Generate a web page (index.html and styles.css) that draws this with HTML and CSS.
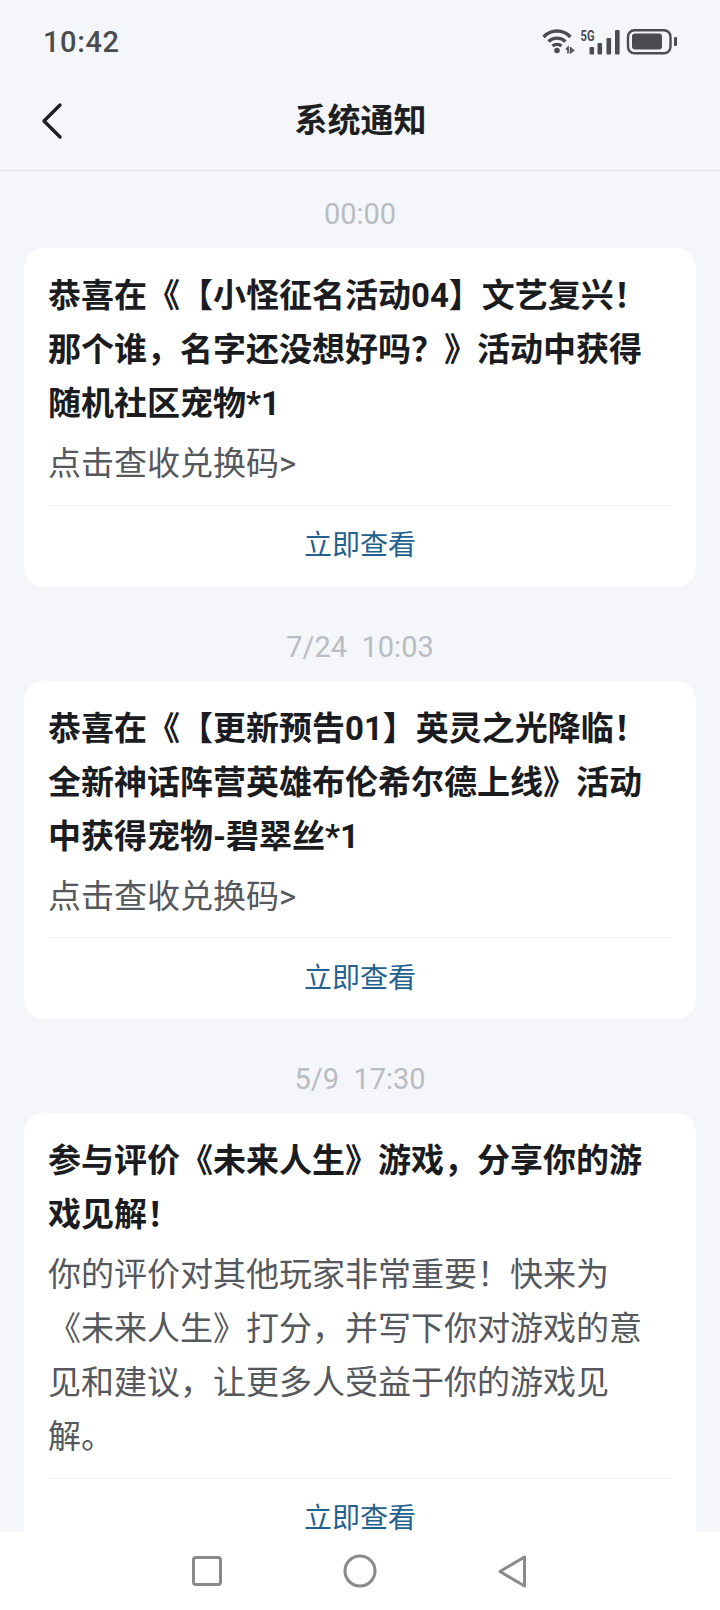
FILE: index.html
```html
<!DOCTYPE html>
<html lang="zh-CN">
<head>
<meta charset="utf-8">
<title>系统通知</title>
<link rel="stylesheet" href="styles.css">
</head>
<body>
<div class="screen">
  <div class="status">
    <span class="clock">10:42</span>
    <svg class="status-icons" width="136" height="34" viewBox="0 -4 136 34">
      <g fill="none" stroke="#4a4c50" stroke-width="3.400">
        <path d="M1.500 8 C9 0 21 0 28.500 8"/>
        <path d="M6.500 12.500 C11 8 19 8 23.500 12.500"/>
        <path d="M10.500 17 C13 15 17 15 19.500 17"/>
      </g>
      <circle cx="15" cy="21.500" r="2.800" fill="#4a4c50"/>
      <path d="M24 20.500 L26 18.500 V24.500 M28.500 18 V24.500 M28.500 19 L31.500 21.500 L28.500 23.500" fill="none" stroke="#4a4c50" stroke-width="1.600"/>
      <text x="38.500" y="12" class="five-g" textLength="14" lengthAdjust="spacingAndGlyphs">5G</text>
      <g fill="#4a4c50">
        <rect x="47.500" y="18" width="4.600" height="7.500" rx="1"/>
        <rect x="55.500" y="14" width="4.600" height="11.500" rx="1"/>
        <rect x="64.500" y="9" width="4.600" height="16.500" rx="1"/>
        <rect x="73" y="1" width="4.600" height="24.500" rx="1"/>
        <rect x="90" y="4.500" width="30" height="16" rx="3"/>
        <rect x="132" y="8" width="3" height="9" rx="1"/>
      </g>
      <rect x="86" y="1.200" width="42.500" height="23" rx="6.500" fill="none" stroke="#4a4c50" stroke-width="2.400"/>
    </svg>
  </div>
  <header class="topbar">
    <svg class="back" width="24" height="40" viewBox="0 0 24 40"><path d="M19 4 L3 20 L19 36" fill="none" stroke="#1d1f22" stroke-width="3.400" stroke-linecap="round" stroke-linejoin="round"/></svg>
    <h1 class="page-title">系统通知</h1>
  </header>
  <main class="feed">
    <div class="stamp">00:00</div>
    <article class="card">
      <h2 class="msg-title">恭喜在《【小怪征名活动04】文艺复兴！那个谁，名字还没想好吗？》活动中获得随机社区宠物*1</h2>
      <p class="msg-body">点击查收兑换码&gt;</p>
      <div class="action">立即查看</div>
    </article>
    <div class="stamp">7/24&nbsp;&nbsp;10:03</div>
    <article class="card">
      <h2 class="msg-title">恭喜在《【更新预告01】英灵之光降临！全新神话阵营英雄布伦希尔德上线》活动中获得宠物-碧翠丝*1</h2>
      <p class="msg-body">点击查收兑换码&gt;</p>
      <div class="action">立即查看</div>
    </article>
    <div class="stamp">5/9&nbsp;&nbsp;17:30</div>
    <article class="card">
      <h2 class="msg-title">参与评价《未来人生》游戏，分享你的游戏见解！</h2>
      <p class="msg-body">你的评价对其他玩家非常重要！快来为《未来人生》打分，并写下你对游戏的意见和建议，让更多人受益于你的游戏见解。</p>
      <div class="action">立即查看</div>
    </article>
  </main>
  <nav class="navbar">
    <svg width="30" height="30" viewBox="0 0 30 30"><rect x="1.500" y="1.500" width="27" height="27" rx="2.500" fill="none" stroke="#8a8a8a" stroke-width="3"/></svg>
    <svg width="34" height="34" viewBox="0 0 34 34"><circle cx="17" cy="17" r="15" fill="none" stroke="#8a8a8a" stroke-width="3"/></svg>
    <svg width="29" height="33" viewBox="0 0 29 33"><path d="M26.500 2 V31 L2 16.500 Z" fill="none" stroke="#8a8a8a" stroke-width="3" stroke-linejoin="round"/></svg>
  </nav>
</div>
</body>
</html>
```
FILE: styles.css
```css
* { box-sizing: border-box; }
html, body { margin: 0; padding: 0; }
body { font-family: "Roboto", "Noto Sans CJK SC", sans-serif; background: #f4f6f9; text-spacing-trim: space-all; }
.screen { width: 720px; height: 1610px; display: flex; flex-direction: column; overflow: hidden; background: #f4f6f9; }
.status { height: 84px; flex: none; display: flex; align-items: center; justify-content: space-between; padding: 0 42px 0 43px; }
.clock { font-family: "Roboto", sans-serif; font-size: 29px; font-weight: 500; color: #4a4c50; letter-spacing: 0.600px; }
.status-icons { display: block; }
.five-g { font-family: "Roboto", sans-serif; font-size: 15px; font-weight: 700; fill: #4a4c50; }
.topbar { height: 87px; flex: none; display: grid; grid-template-columns: 1fr auto 1fr; align-items: center; padding: 0 0 13px 41px; border-bottom: 1px solid #e3e5e8; }
.back { display: block; }
.page-title { margin: 0; font-size: 33px; line-height: 44px; font-weight: 700; color: #1d1f22; transform: translateX(-20px); }
.feed { flex: 1; min-height: 0; overflow: hidden; padding: 0 24px; }
.stamp { height: 77px; padding-top: 22px; text-align: center; font-size: 29px; line-height: 43px; color: #b9bcc1; }
.card + .stamp { margin-top: 17px; }
.card { background: #fff; border-radius: 20px; padding: 21px 24px 0; }
.msg-title { margin: 0; font-size: 33px; font-weight: 700; line-height: 54px; color: #1a1c1f; }
.msg-body { margin: 6px 0 0; padding-bottom: 13.500px; font-size: 33px; font-weight: 400; line-height: 54px; color: #55585d; }
.action { border-top: 1px solid #f2f3f5; height: 82px; padding-bottom: 6px; display: flex; align-items: center; justify-content: center; font-size: 28px; color: #24618f; }
.navbar { height: 78px; flex: none; background: #fff; display: flex; align-items: center; justify-content: center; gap: 121px; padding-right: 2px; }
```
